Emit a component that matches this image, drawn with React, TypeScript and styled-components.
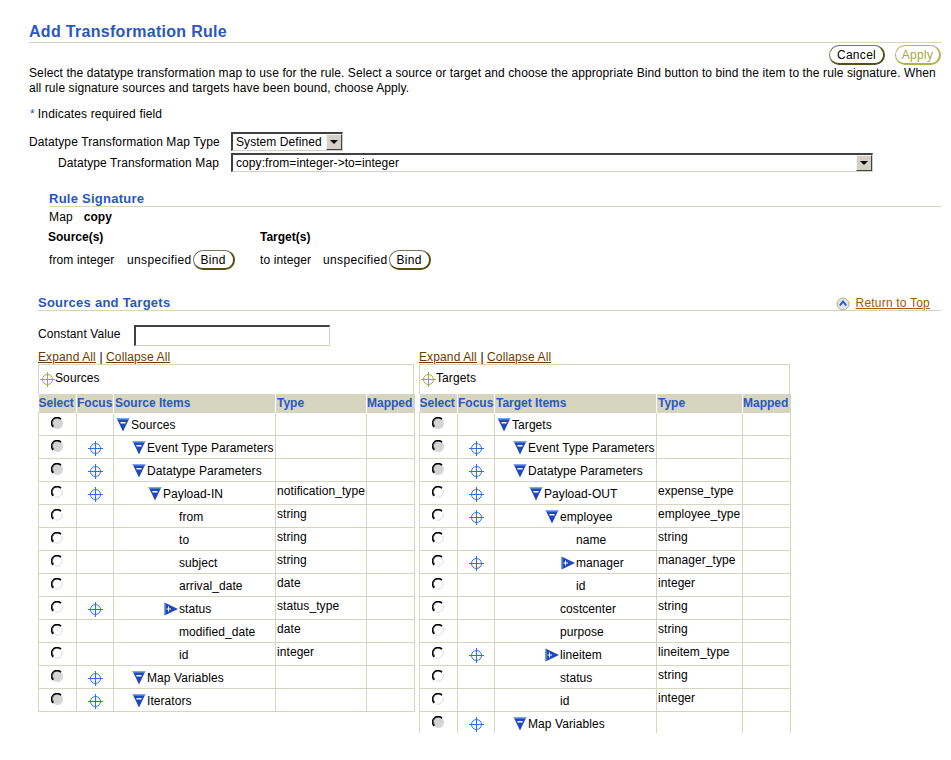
import React from "react";
import styled, { createGlobalStyle } from "styled-components";

const Global = createGlobalStyle`
  html, body { margin: 0; padding: 0; background: #fff; }
  body { font-family: "Liberation Sans", Arial, sans-serif; font-size: 12px; color: #000; }
  * { box-sizing: border-box; }
`;
const Page = styled.div`
  width: 951px; height: 733px; overflow: hidden; padding: 22px 10px 0 29px; position: relative;
`;
const Title = styled.h1`
  margin: 0; height: 21px; font-size: 16px; line-height: 19px; font-weight: bold; letter-spacing: 0.3px; color: #2a57c0;
  border-bottom: 1px solid #d6d6c0;
`;
const ButtonRow = styled.div`
  display: flex; justify-content: flex-end; gap: 10px; margin-top: 2px; height: 20px;
`;
const Pill = styled.button<{ $disabled?: boolean }>`
  font: 12px/16px "Liberation Sans", Arial, sans-serif; letter-spacing: 0.3px; padding: 1px 0 0; height: 20px;
  background: #fff; border-radius: 10px; border: 1px solid ${p => (p.$disabled ? "#b5b56a" : "#77775a")};
  border-bottom: 2px solid ${p => (p.$disabled ? "#b0b050" : "#55500f")};
  border-right: 2px solid ${p => (p.$disabled ? "#b0b050" : "#55500f")};
  color: ${p => (p.$disabled ? "#a6a63f" : "#000")};
`;
const Cancel = styled(Pill)` width: 56px; `;
const Apply = styled(Pill)` width: 46px; `;
const Bind = styled(Pill)` width: 42px; margin-left: 1px; `;
const Description = styled.p`
  margin: 1px 0 0; font-size: 12px; line-height: 15px; letter-spacing: 0.1px; width: 912px;
`;
const Required = styled.div`
  margin-top: 11px; height: 15px; line-height: 15px; letter-spacing: 0.15px;
  span { color: #2a57c0; margin: 0 3px 0 1px; }
`;
const FormRows = styled.div`
  margin-top: 10px; display: grid; grid-template-columns: 190px auto; column-gap: 12px; row-gap: 2px;
  justify-content: start; align-items: center;
`;
const FormLabel = styled.label`
  text-align: right; letter-spacing: 0.11px; line-height: 21px; height: 19px; white-space: nowrap;
`;
const SelectBox = styled.div<{ $w: number }>`
  width: ${p => p.$w}px; height: 19px; display: flex; align-items: center; justify-content: space-between;
  border: 1px solid #808080; border-top: 2px solid #404040; border-left: 2px solid #404040;
  border-right-color: #d4d0c8; border-bottom-color: #d4d0c8; padding: 0 0 0 3px; letter-spacing: 0.07px; background: #fff;
`;
const Arrow = styled.span`
  width: 16px; height: 16px; background: #d4d0c8; display: flex; align-items: center; justify-content: center;
  border: 1px solid; border-color: #f4f4f0 #404040 #404040 #f4f4f0; flex: none;
  &::after { content: ""; border: 4px solid transparent; border-top: 4px solid #000; border-bottom: 0; }
`;
const SubHeader = styled.h2<{ $inset: number }>`
  margin: 0 0 0 ${p => p.$inset}px; height: 16px; font-size: 13px; line-height: 15px; font-weight: bold;
  letter-spacing: 0.25px; color: #2a57c0; border-bottom: 1px solid #d6d6c0; position: relative;
`;
const RuleSection = styled.section` margin-top: 19px; `;
const MapLine = styled.div`
  margin: 3px 0 0 20px; line-height: 15px; display: flex; gap: 11px; letter-spacing: 0.15px;
  b { letter-spacing: 0; }
`;
const SigGrid = styled.div`
  margin: 5px 0 0 20px; display: grid; grid-template-columns: 211px 1fr;
`;
const SigHead = styled.div`
  font-weight: bold; line-height: 15px; margin-left: -1px;
  &:nth-child(2) { margin-left: 0; }
`;
const SigRow = styled.div` display: flex; align-items: center; margin-top: 5px; height: 20px; letter-spacing: 0.12px; `;
const SigName = styled.span<{ $w: number }>` width: ${p => p.$w}px; `;
const Unspecified = styled.span` letter-spacing: 0.35px; `;
const SourcesSection = styled.section` margin-top: 25px; `;
const TopLink = styled.a`
  position: absolute; right: 11px; top: 1px; display: flex; align-items: center; gap: 6px; font-weight: normal; font-size: 12px;
  color: #a35a00; text-decoration: underline; letter-spacing: 0.2px;
`;
const ConstantRow = styled.div`
  margin: 14px 0 0 9px; display: flex; align-items: center; height: 21px; line-height: 19px; letter-spacing: 0.1px;
`;
const ConstantLabel = styled.span` padding-bottom: 2px; `;
const TextInput = styled.div`
  margin-left: 13px; width: 196px; height: 21px; border: 1px solid #d4d0c8; border-top: 2px solid #404040; border-left: 2px solid #404040;
`;
const Tables = styled.div` margin: 3px 0 0 9px; display: flex; gap: 5px; align-items: flex-start; `;
const TreeColumn = styled.div<{ $w: number }>` width: ${p => p.$w}px; flex: none; `;
const Links = styled.div`
  height: 15px; line-height: 17px; letter-spacing: 0.12px; color: #000;
  a { color: #6b3c00; text-decoration: underline; }
`;
const Panel = styled.div`
  height: 30px; border: 1px solid #d6d6c0; border-bottom: 0; display: flex; align-items: center; padding: 0 0 0 1px; letter-spacing: 0.1px;
`;
const PanelTitle = styled.span` padding-bottom: 3px; `;
const Table = styled.table`
  border-collapse: collapse; table-layout: fixed; width: 100%; font-size: 12px;
  th { background: #d6d6c0; color: #2a57c0; height: 18px; padding: 0; font-size: 12px; text-align: left; font-weight: bold; border-left: 1px solid #fff; white-space: nowrap; overflow: hidden; }
  th:first-child { border-left: 0; }
  th:nth-child(3), th:nth-child(4) { padding-left: 1px; }
`;
const Cell = styled.td<{ $top?: boolean }>`
  border: 1px solid #d6d6c0; height: 23px; padding: 0 0 0 1px; white-space: nowrap; overflow: hidden;
  letter-spacing: 0.07px;
  vertical-align: ${p => (p.$top ? "top" : "middle")};
  ${p => (p.$top ? "padding-top:2px;" : "")}
`;
const ControlCell = styled.td<{ $pad: number }>`
  border: 1px solid #d6d6c0; height: 23px; padding: ${p => p.$pad}px 0 0; vertical-align: top; overflow: hidden;
`;
const Tree = styled.div<{ $indent: number }>`
  display: flex; align-items: center; padding-left: ${p => p.$indent}px; padding-top: 2px;
`;
const IconSlot = styled.span` display: inline-flex; width: 15px; flex: none; `;
const NoIcon = styled.span<{ $indent: number }>` display: block; padding-left: ${p => p.$indent}px; padding-top: 2px; `;
const FocusSlot = styled.span` display: block; width: 15px; margin: 0 auto; `;
const RadioMark = styled.svg` display: block; margin: 0 auto; `;
const TargetMark = styled.svg` display: block; flex: none; `;

const Radio = ({ filled }: { filled: boolean }) => (
  <RadioMark width="13" height="13" viewBox="0 0 13 13">
    <circle cx="6.5" cy="6.5" r="5.5" fill={filled ? "#d4d4d4" : "#fff"} />
    <path d="M10 2.2A5.5 5.5 0 0 0 2.2 10" fill="none" stroke="#000" strokeWidth="1.6" />
    <path d="M2.5 2.5A5 5 0 0 0 2.5 9" fill="none" stroke="#555" strokeWidth="1" />
    <path d="M11 4A5.5 5.5 0 0 1 4 11" fill="none" stroke="#ddd" strokeWidth="1" />
  </RadioMark>
);
const Target = ({ color = "#2f6fe8", size = 15 }: { color?: string; size?: number }) => (
  <TargetMark width={size} height={size} viewBox="0 0 15 15">
    <circle cx="7.5" cy="7.5" r="5" fill="none" stroke={color} strokeWidth="1" />
    <path d="M7.5 0V15M0 7.5H15" stroke={color} strokeWidth="1" />
  </TargetMark>
);
const Focus = () => <FocusSlot><Target /></FocusSlot>;
const Collapse = () => (
  <svg width="14" height="15" viewBox="0 0 14 15" style={{ display: "block" }}>
    <path d="M0.5 1H13.5L7 14.5Z" fill="#1f49b8" />
    <path d="M0.5 1H13.5L12.8 2.5H1.2Z" fill="#7fa5ee" />
    <path d="M4.5 5H9.5V6.5H4.5Z" fill="#fff" />
  </svg>
);
const Expand = () => (
  <svg width="14" height="14" viewBox="0 0 14 14" style={{ display: "block" }}>
    <path d="M0.5 0.5V13.5L14 7Z" fill="#1f49b8" />
    <path d="M0.5 1V13L1.6 12.5V1.5Z" fill="#6f96e6" />
    <path d="M4 4.5H5V6.5H7V7.5H5V9.5H4V7.5H2.5V6.5H4Z" fill="#fff" />
  </svg>
);
const TopArrow = () => (
  <svg width="14" height="14" viewBox="0 0 14 14">
    <circle cx="7" cy="7" r="6" fill="#dfe4f4" stroke="#b5b56a" />
    <path d="M3.8 8.5L7 4.5L10.2 8.5" fill="none" stroke="#2a57c0" strokeWidth="2" />
  </svg>
);

type Row = { name: string; indent: number; icon?: "c" | "e"; type?: string; focus?: boolean; gray?: boolean };

const sourceRows: Row[] = [
  { name: "Sources", indent: 1, icon: "c", gray: true },
  { name: "Event Type Parameters", indent: 17, icon: "c", focus: true, gray: true },
  { name: "Datatype Parameters", indent: 17, icon: "c", focus: true, gray: true },
  { name: "Payload-IN", indent: 33, icon: "c", type: "notification_type", focus: true },
  { name: "from", indent: 64, type: "string" },
  { name: "to", indent: 64, type: "string" },
  { name: "subject", indent: 64, type: "string" },
  { name: "arrival_date", indent: 64, type: "date" },
  { name: "status", indent: 49, icon: "e", type: "status_type", focus: true },
  { name: "modified_date", indent: 64, type: "date" },
  { name: "id", indent: 64, type: "integer" },
  { name: "Map Variables", indent: 17, icon: "c", focus: true, gray: true },
  { name: "Iterators", indent: 17, icon: "c", focus: true, gray: true },
];
const targetRows: Row[] = [
  { name: "Targets", indent: 1, icon: "c", gray: true },
  { name: "Event Type Parameters", indent: 17, icon: "c", focus: true, gray: true },
  { name: "Datatype Parameters", indent: 17, icon: "c", focus: true, gray: true },
  { name: "Payload-OUT", indent: 33, icon: "c", type: "expense_type", focus: true },
  { name: "employee", indent: 49, icon: "c", type: "employee_type", focus: true },
  { name: "name", indent: 80, type: "string" },
  { name: "manager", indent: 65, icon: "e", type: "manager_type", focus: true },
  { name: "id", indent: 80, type: "integer" },
  { name: "costcenter", indent: 64, type: "string" },
  { name: "purpose", indent: 64, type: "string" },
  { name: "lineitem", indent: 49, icon: "e", type: "lineitem_type", focus: true },
  { name: "status", indent: 64, type: "string" },
  { name: "id", indent: 64, type: "integer" },
  { name: "Map Variables", indent: 17, icon: "c", focus: true, gray: true },
];

const TreeTable = ({ title, items, rows, widths }: { title: string; items: string; rows: Row[]; widths: number[] }) => (
  <>
    <Links><a>Expand All</a> | <a>Collapse All</a></Links>
    <Panel><Target color="#a6a63f" size={15} /><PanelTitle>{title}</PanelTitle></Panel>
    <Table>
      <colgroup>{widths.map((w, i) => <col key={i} style={{ width: w }} />)}</colgroup>
      <thead>
        <tr><th>Select</th><th>Focus</th><th>{items}</th><th>Type</th><th>Mapped</th></tr>
      </thead>
      <tbody>
        {rows.map((r, i) => (
          <tr key={i}>
            <ControlCell $pad={4}><Radio filled={!!r.gray} /></ControlCell>
            <ControlCell $pad={5}>{r.focus && <Focus />}</ControlCell>
            <Cell>
              {r.icon ? (
                <Tree $indent={r.indent}>
                  <IconSlot>{r.icon === "c" ? <Collapse /> : <Expand />}</IconSlot>
                  {r.name}
                </Tree>
              ) : (
                <NoIcon $indent={r.indent}>{r.name}</NoIcon>
              )}
            </Cell>
            <Cell $top>{r.type}</Cell>
            <Cell />
          </tr>
        ))}
      </tbody>
    </Table>
  </>
);

export default function App() {
  return (
    <Page>
      <Global />
      <Title>Add Transformation Rule</Title>
      <ButtonRow><Cancel>Cancel</Cancel><Apply $disabled>Apply</Apply></ButtonRow>
      <Description>
        Select the datatype transformation map to use for the rule. Select a source or target and choose the appropriate Bind button to bind the item to the rule signature. When all rule signature sources and targets have been bound, choose Apply.
      </Description>
      <Required><span>*</span>Indicates required field</Required>
      <FormRows>
        <FormLabel>Datatype Transformation Map Type</FormLabel>
        <SelectBox $w={112}>System Defined<Arrow /></SelectBox>
        <FormLabel>Datatype Transformation Map</FormLabel>
        <SelectBox $w={642}>copy:from=integer-&gt;to=integer<Arrow /></SelectBox>
      </FormRows>
      <RuleSection>
        <SubHeader $inset={20}>Rule Signature</SubHeader>
        <MapLine><span>Map</span><b>copy</b></MapLine>
        <SigGrid>
          <SigHead>Source(s)</SigHead>
          <SigHead>Target(s)</SigHead>
          <SigRow><SigName $w={78}>from integer</SigName><Unspecified>unspecified</Unspecified><Bind>Bind</Bind></SigRow>
          <SigRow><SigName $w={63}>to integer</SigName><Unspecified>unspecified</Unspecified><Bind>Bind</Bind></SigRow>
        </SigGrid>
      </RuleSection>
      <SourcesSection>
        <SubHeader $inset={9}>
          Sources and Targets
          <TopLink><TopArrow />Return to Top</TopLink>
        </SubHeader>
        <ConstantRow><ConstantLabel>Constant Value</ConstantLabel><TextInput /></ConstantRow>
        <Tables>
          <TreeColumn $w={376}>
            <TreeTable title="Sources" items="Source Items" rows={sourceRows} widths={[38, 37, 162, 91, 48]} />
          </TreeColumn>
          <TreeColumn $w={371}>
            <TreeTable title="Targets" items="Target Items" rows={targetRows} widths={[38, 37, 162, 86, 48]} />
          </TreeColumn>
        </Tables>
      </SourcesSection>
    </Page>
  );
}
